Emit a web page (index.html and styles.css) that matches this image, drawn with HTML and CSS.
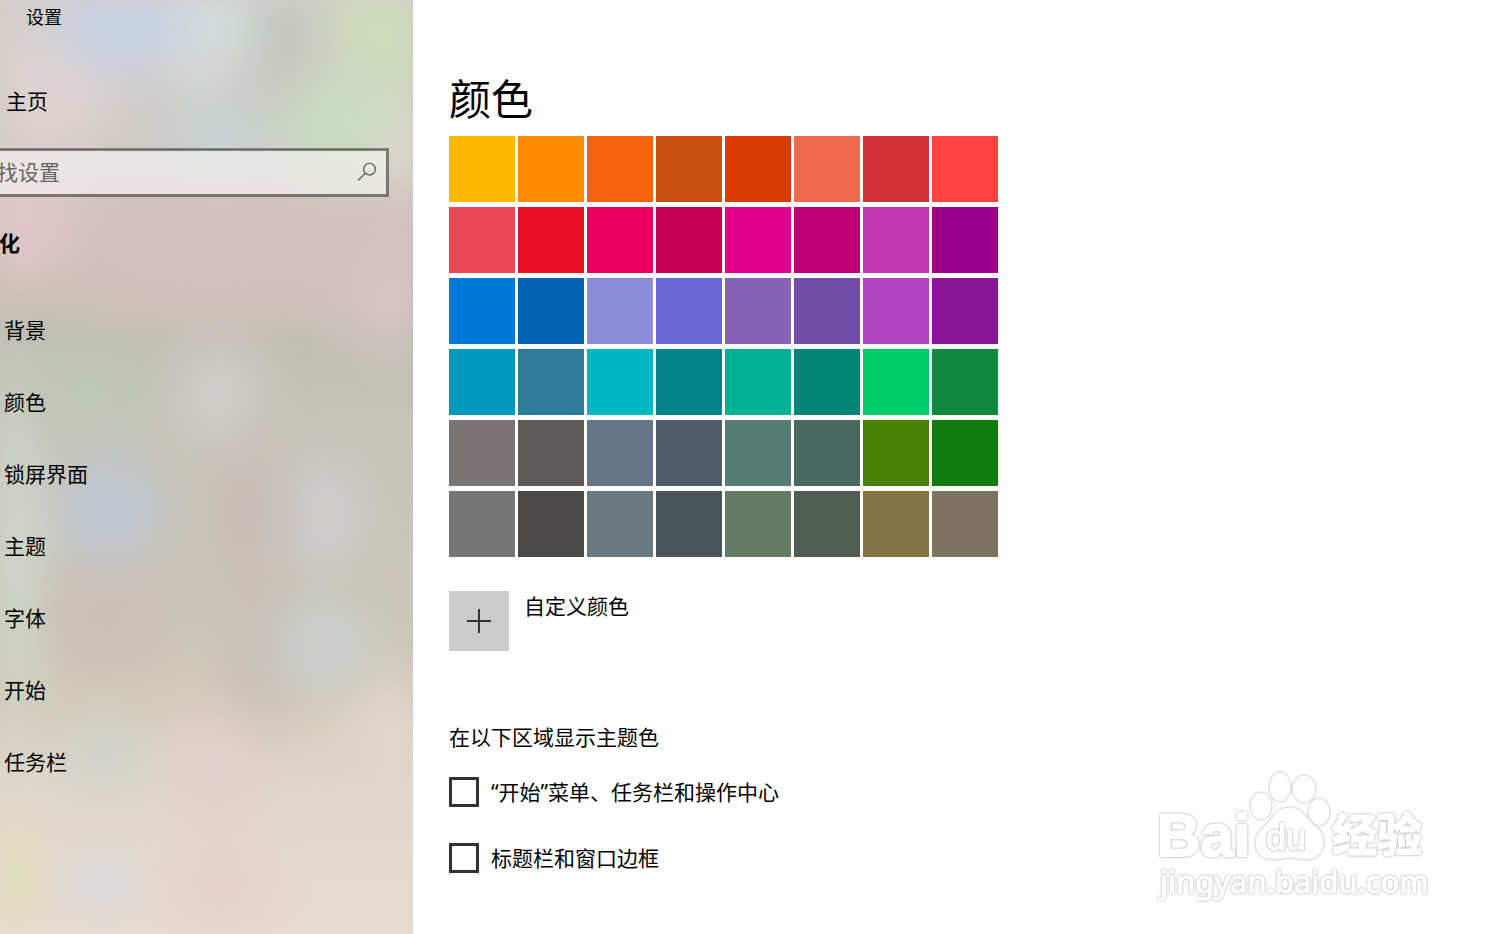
FILE: index.html
```html
<!DOCTYPE html>
<html lang="zh-CN">
<head>
<meta charset="utf-8">
<title>设置</title>
<link rel="stylesheet" href="styles.css">
</head>
<body>
<div class="window">
  <aside class="sidebar">
    <div class="window-title">设置</div>
    <a class="home" href="#">主页</a>
    <div class="search">
      <input class="search-input" type="text" placeholder="找设置" aria-label="找设置">
      <svg class="search-icon" viewBox="0 0 20 20" aria-hidden="true"><circle cx="12.5" cy="7.2" r="5.8"/><path d="M8.3 11.3L1 18.6"/></svg>
    </div>
    <h2 class="group">化</h2>
    <nav class="nav">
      <a href="#">背景</a>
      <a href="#">颜色</a>
      <a href="#">锁屏界面</a>
      <a href="#">主题</a>
      <a href="#">字体</a>
      <a href="#">开始</a>
      <a href="#">任务栏</a>
    </nav>
  </aside>
  <main class="content">
    <h1 class="page-title">颜色</h1>
    <div class="swatches">
      <button class="c1"></button><button class="c2"></button><button class="c3"></button><button class="c4"></button><button class="c5"></button><button class="c6"></button><button class="c7"></button><button class="c8"></button>
      <button class="c9"></button><button class="c10"></button><button class="c11"></button><button class="c12"></button><button class="c13"></button><button class="c14"></button><button class="c15"></button><button class="c16"></button>
      <button class="c17"></button><button class="c18"></button><button class="c19"></button><button class="c20"></button><button class="c21"></button><button class="c22"></button><button class="c23"></button><button class="c24"></button>
      <button class="c25"></button><button class="c26"></button><button class="c27"></button><button class="c28"></button><button class="c29"></button><button class="c30"></button><button class="c31"></button><button class="c32"></button>
      <button class="c33"></button><button class="c34"></button><button class="c35"></button><button class="c36"></button><button class="c37"></button><button class="c38"></button><button class="c39"></button><button class="c40"></button>
      <button class="c41"></button><button class="c42"></button><button class="c43"></button><button class="c44"></button><button class="c45"></button><button class="c46"></button><button class="c47"></button><button class="c48"></button>
    </div>
    <div class="custom">
      <button class="add" id="add" aria-labelledby="add-label"><svg viewBox="0 0 24 24" aria-hidden="true"><path d="M0 12H24M12 0V24"/></svg></button>
      <label id="add-label" for="add">自定义颜色</label>
    </div>
    <h3 class="section">在以下区域显示主题色</h3>
    <div class="option"><input type="checkbox" id="start"><label for="start">“开始”菜单、任务栏和操作中心</label></div>
    <div class="option"><input type="checkbox" id="titlebar"><label for="titlebar">标题栏和窗口边框</label></div>
  </main>
  <svg class="watermark" viewBox="0 0 280 140">
    <g class="mark">
      <text class="latin" x="7" y="86">Bai</text>
      <ellipse cx="111" cy="36" rx="10" ry="13"/>
      <ellipse cx="130" cy="17" rx="10" ry="14"/>
      <ellipse cx="154" cy="19" rx="11" ry="13"/>
      <ellipse cx="169" cy="42" rx="10" ry="13"/>
      <path d="M140 38C149 38 153 43 158 50C164 57 173 60 173 72C173 83 165 89 156 89C149 89 146 87 140 87C134 87 130 89 122 89C113 89 106 83 106 73C106 62 115 57 121 50C126 43 131 38 140 38Z"/>
      <text class="du" x="116" y="80">du</text>
      <text class="cjk" x="182" y="82">经验</text>
      <text class="url" x="10" y="123">jingyan.baidu.com</text>
    </g>
  </svg>
</div>
</body>
</html>
```
FILE: styles.css
```css
* { box-sizing: border-box; }
body {
  margin: 0;
  background: #fff;
  color: #000;
  font: 400 21px/30px "Noto Sans", "Noto Sans CJK SC", sans-serif;
}
a { color: inherit; text-decoration: none; }
h1, h2, h3 { margin: 0; font-weight: 400; }
button, input { font: inherit; border: 0; border-radius: 0; padding: 0; margin: 0; }
.window { position: relative; display: flex; min-height: 100vh; }

.sidebar {
  position: relative;
  isolation: isolate;
  flex: 0 0 413px;
  overflow: hidden;
  display: flex;
  flex-direction: column;
  background: linear-gradient(#d4cfcb 0, #d0cbc5 160px, #d0c0bc 250px, #c0beb4 340px, #c7c5bb 450px, #cac6b9 600px, #d2cab9 700px, #e0d8cd 790px, #e6dbcf 934px);
}
/* blurred wallpaper behind the pane */
.sidebar::before {
  content: "";
  position: absolute;
  inset: 0;
  z-index: -1;
  filter: blur(14px);
  background:
    radial-gradient(ellipse 100px 80px at 120px 20px, #c6d0e4 20%, transparent),
    radial-gradient(ellipse 80px 90px at 205px 20px, #d6dfdf 10%, transparent),
    radial-gradient(ellipse 70px 100px at 270px 30px, #bfc6bc 20%, transparent),
    radial-gradient(ellipse 110px 120px at 410px 10px, #ccdcb8 40%, transparent),
    radial-gradient(ellipse 85px 85px at 335px 120px, #c8dcc0 20%, transparent),
    radial-gradient(ellipse 80px 60px at 220px 132px, #c6d3d3 10%, transparent),
    radial-gradient(ellipse 80px 70px at 413px 135px, #e4dbcf 10%, transparent),
    radial-gradient(ellipse 90px 90px at 50px 90px, #e0d3d2 10%, transparent),
    radial-gradient(ellipse 100px 90px at 0px 220px, #e4c8c9 10%, transparent),
    radial-gradient(ellipse 260px 95px at 220px 250px, #d4c0be 25%, transparent),
    radial-gradient(ellipse 120px 90px at 413px 290px, #d8c6c8 20%, transparent),
    radial-gradient(ellipse 80px 80px at 88px 390px, #bcc6b9 10%, transparent),
    radial-gradient(ellipse 70px 80px at 218px 392px, #d0cdca 10%, transparent),
    radial-gradient(ellipse 75px 75px at 108px 510px, #bec7d4 20%, transparent),
    radial-gradient(ellipse 70px 120px at 245px 510px, #c6bbb6 10%, transparent),
    radial-gradient(ellipse 70px 80px at 320px 515px, #cfccce 10%, transparent),
    radial-gradient(ellipse 65px 250px at 0px 550px, #cfdad0 10%, transparent),
    radial-gradient(ellipse 100px 80px at 105px 615px, #cabdb8 10%, transparent),
    radial-gradient(ellipse 75px 70px at 325px 645px, #c8cecd 15%, transparent),
    radial-gradient(ellipse 60px 120px at 260px 640px, #c8bfb8 10%, transparent),
    radial-gradient(ellipse 60px 60px at 105px 755px, #cfd2cb 10%, transparent),
    radial-gradient(ellipse 80px 80px at 215px 765px, #e2cecd 10%, transparent),
    radial-gradient(ellipse 100px 80px at 413px 730px, #e5d9cf 10%, transparent),
    radial-gradient(ellipse 60px 80px at 0px 875px, #e0deb8 20%, transparent),
    radial-gradient(ellipse 55px 50px at 105px 885px, #dad9db 15%, transparent),
    radial-gradient(ellipse 75px 80px at 220px 885px, #e7d0cd 10%, transparent);
}
.window-title { padding: 2px 26px 0; font-size: 18px; }
.home { margin-top: 54px; padding-left: 6px; }
.search {
  display: flex;
  align-items: center;
  height: 49px;
  margin: 32px 24px 0 -6px;
  padding: 0 9px 2px 0;
  border: 3px solid rgba(0, 0, 0, .42);
  background: rgba(255, 255, 255, .5) padding-box;
}
.search-input { flex: 1; min-width: 0; height: 100%; background: transparent; outline: 0; }
.search-input::placeholder { color: #666; opacity: 1; }
.search-icon { width: 20px; height: 20px; fill: none; stroke: #666; stroke-width: 1.4; }
.group { margin: 31px 0 0 -1px; font-size: 21px; font-weight: 700; }
.nav { display: flex; flex-direction: column; gap: 42px; margin-top: 57px; padding-left: 4px; }

.content { flex: 1; min-width: 0; padding: 69px 36px 0; }
.page-title { font-size: 42px; line-height: 60px; }
.swatches { display: grid; grid-template-columns: repeat(8, 66px); gap: 5px 3px; margin-top: 7px; }
.swatches button { height: 66px; }
.custom { display: flex; align-items: flex-start; gap: 15px; margin-top: 34px; }
.add { display: grid; place-items: center; width: 60px; height: 60px; background: #ccc; }
.add svg { width: 24px; height: 24px; stroke: #333; stroke-width: 2; }
.section { margin: 71px 0 25px; font-size: 21px; line-height: 30px; }
.option { display: flex; align-items: center; gap: 12px; margin-bottom: 36px; }
.option input { appearance: none; width: 30px; height: 30px; border: 3px solid #333; background: #fff; }

.watermark { position: absolute; right: 80px; bottom: 24px; width: 280px; height: 140px; }
.mark { fill: #fff; stroke: #fff; stroke-width: 1; stroke-linejoin: round; }
.mark > * { filter: drop-shadow(0 0 1px #bbb) drop-shadow(0 0 1px #ddd); }
.latin { font: 700 60px "Liberation Sans", sans-serif; stroke-width: 2; }
.du { font: 400 36px "Liberation Sans", sans-serif; }
.cjk { font: 900 45px "Noto Sans CJK SC", sans-serif; }
.url { font: 400 31px "Noto Sans", sans-serif; }

.c1 { background: #ffb900; } .c2 { background: #ff8c00; } .c3 { background: #f7630c; } .c4 { background: #ca5010; }
.c5 { background: #da3b01; } .c6 { background: #ef6950; } .c7 { background: #d13438; } .c8 { background: #ff4343; }
.c9 { background: #e74856; } .c10 { background: #e81123; } .c11 { background: #ea005e; } .c12 { background: #c30052; }
.c13 { background: #e3008c; } .c14 { background: #bf0077; } .c15 { background: #c239b3; } .c16 { background: #9a0089; }
.c17 { background: #0078d7; } .c18 { background: #0063b1; } .c19 { background: #8e8cd8; } .c20 { background: #6b69d6; }
.c21 { background: #8764b8; } .c22 { background: #744da9; } .c23 { background: #b146c2; } .c24 { background: #881798; }
.c25 { background: #0099bc; } .c26 { background: #2d7d9a; } .c27 { background: #00b7c3; } .c28 { background: #038387; }
.c29 { background: #00b294; } .c30 { background: #018574; } .c31 { background: #00cc6a; } .c32 { background: #10893e; }
.c33 { background: #7a7574; } .c34 { background: #5d5a58; } .c35 { background: #68768a; } .c36 { background: #515c6b; }
.c37 { background: #567c73; } .c38 { background: #486860; } .c39 { background: #498205; } .c40 { background: #107c10; }
.c41 { background: #767676; } .c42 { background: #4c4a48; } .c43 { background: #69797e; } .c44 { background: #4a5459; }
.c45 { background: #647c64; } .c46 { background: #525e54; } .c47 { background: #847545; } .c48 { background: #7e735f; }
```
